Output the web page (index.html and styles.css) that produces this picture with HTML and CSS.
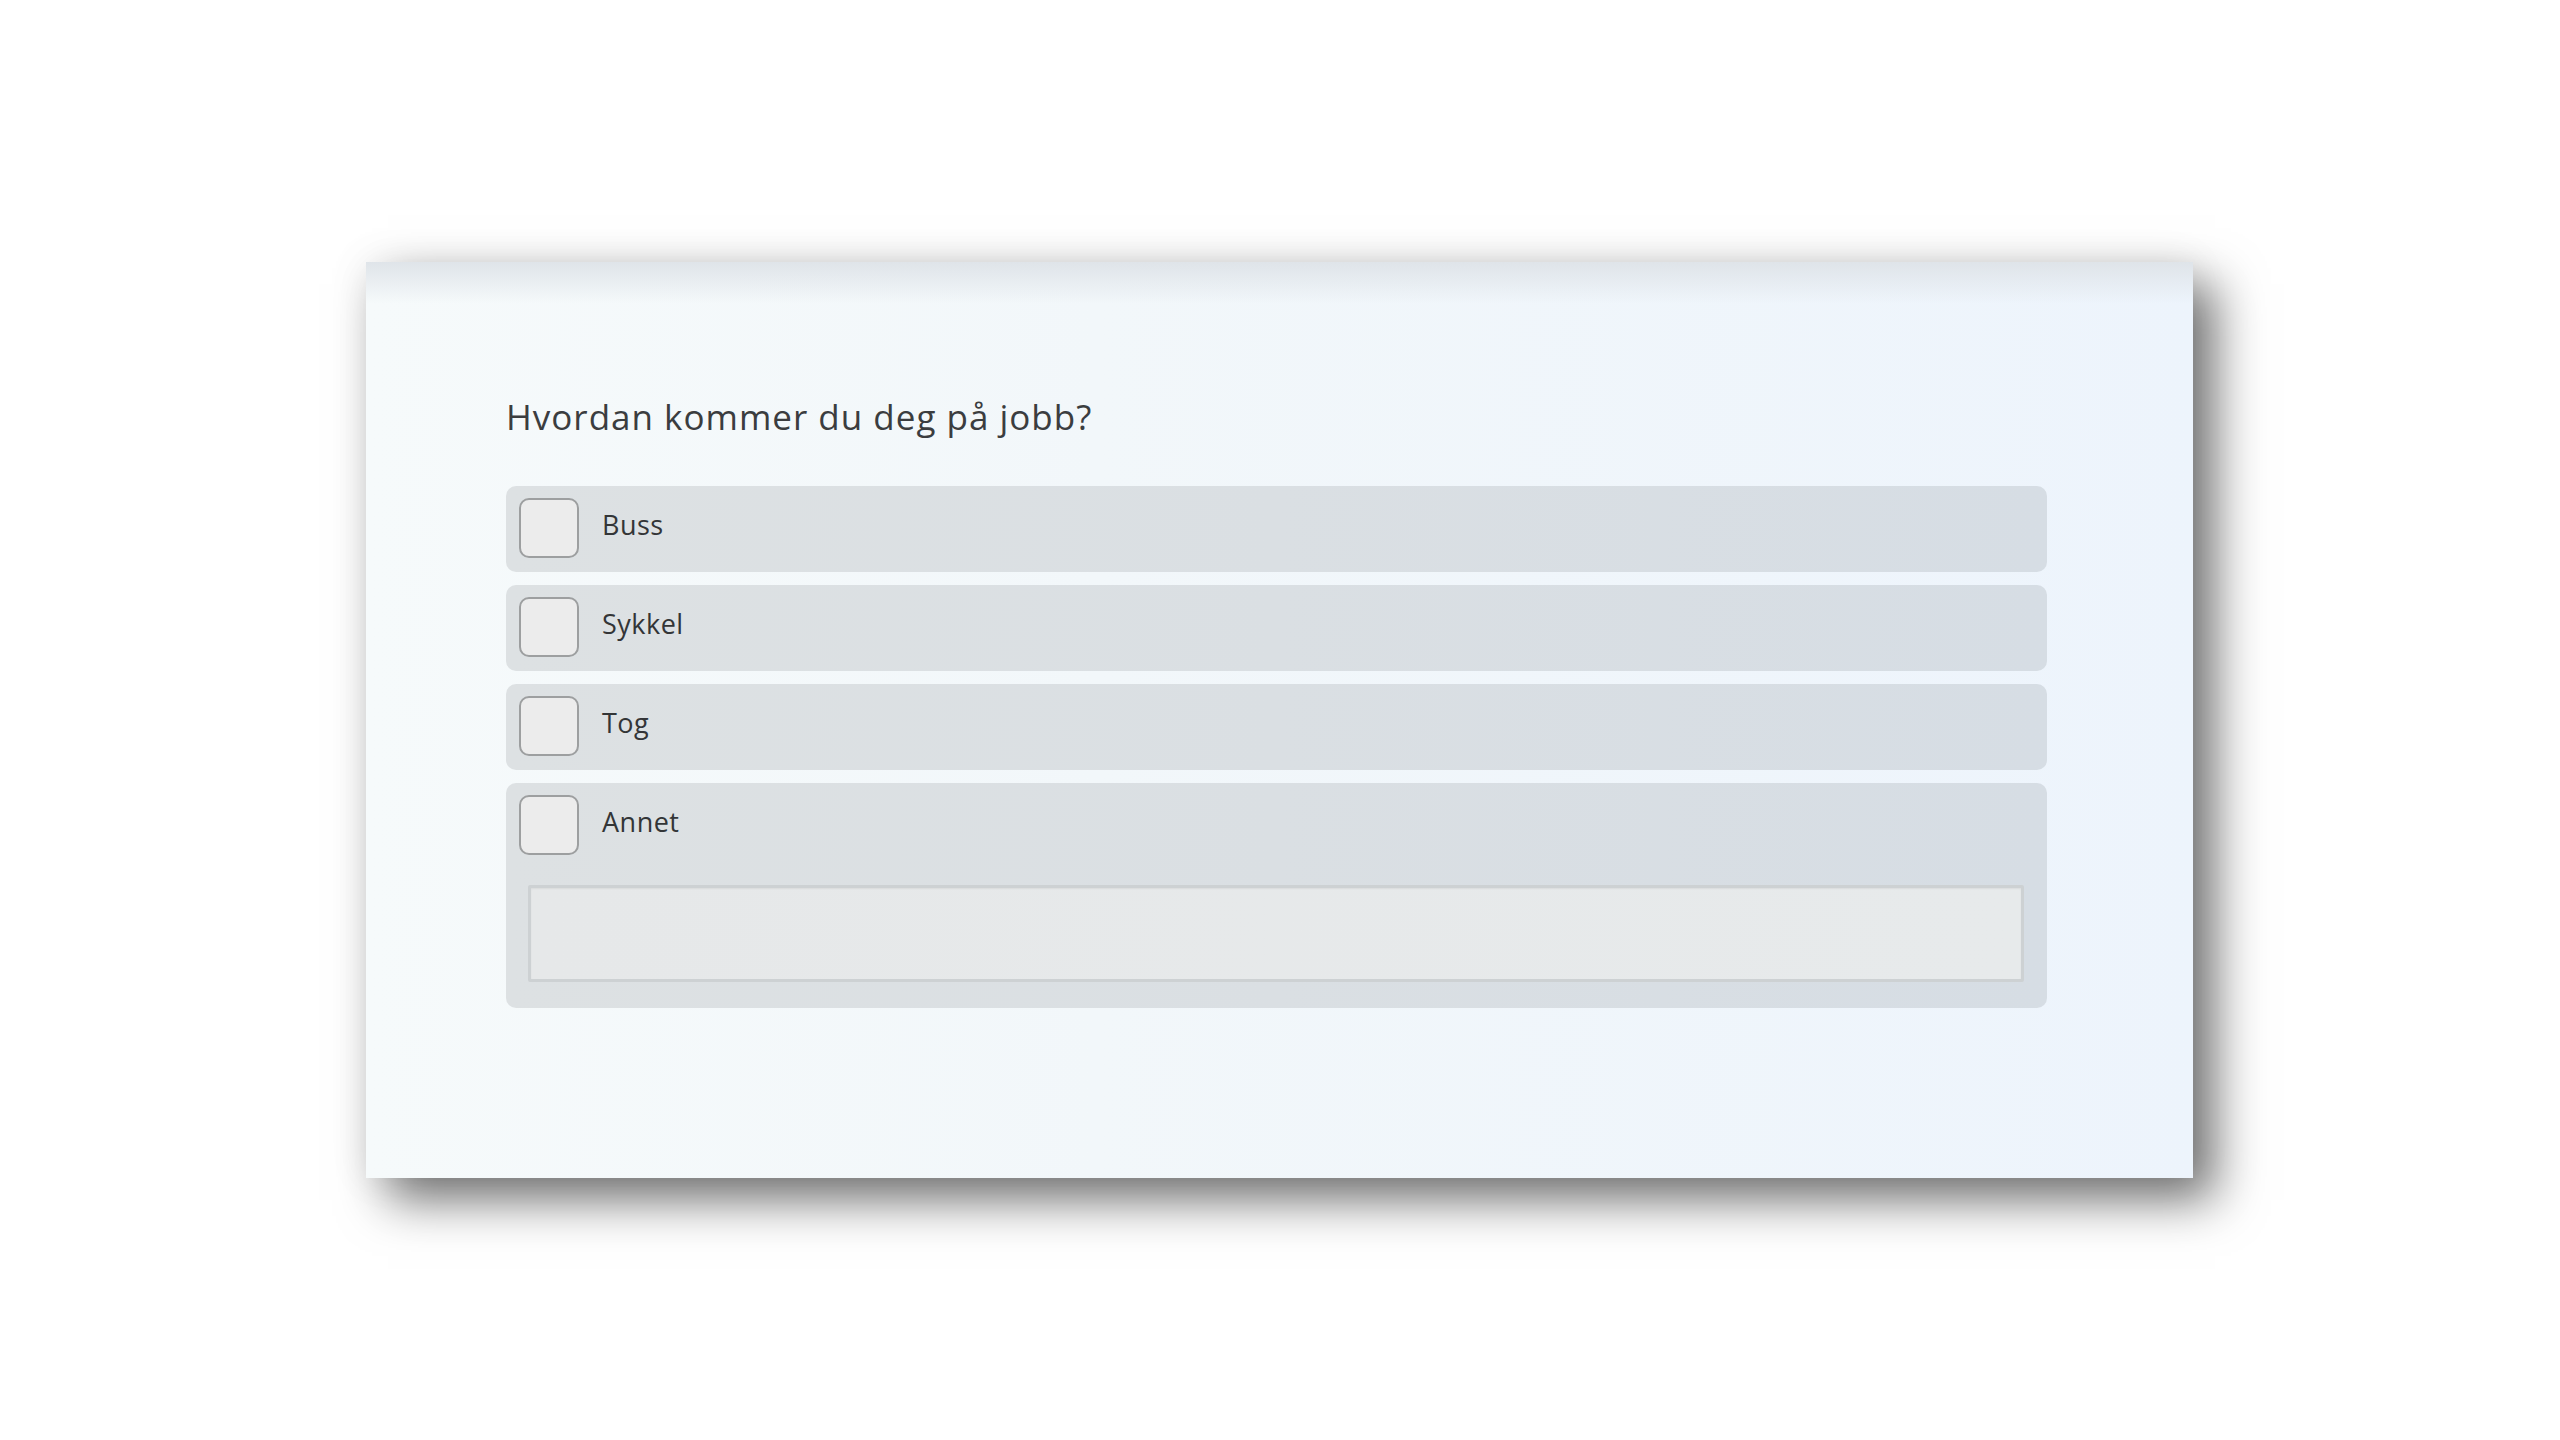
FILE: index.html
```html
<!DOCTYPE html>
<html lang="no">
<head>
<meta charset="utf-8">
<title>Hvordan kommer du deg på jobb?</title>
<link rel="stylesheet" href="styles.css">
</head>
<body>
<main class="page">
  <section class="card">
    <h1 class="question">Hvordan kommer du deg på jobb?</h1>
    <div class="options">
      <label class="option">
        <span class="option-head"><span class="box"></span><span class="label">Buss</span></span>
      </label>
      <label class="option">
        <span class="option-head"><span class="box"></span><span class="label">Sykkel</span></span>
      </label>
      <label class="option">
        <span class="option-head"><span class="box"></span><span class="label">Tog</span></span>
      </label>
      <div class="option option-other">
        <span class="option-head"><span class="box"></span><span class="label">Annet</span></span>
        <div class="other-input"></div>
      </div>
    </div>
  </section>
</main>
</body>
</html>
```

FILE: styles.css
```css
html, body {
  margin: 0;
  padding: 0;
  background: #ffffff;
}
body {
  width: 2560px;
  height: 1440px;
  overflow: hidden;
  font-family: "Open Sans", "Noto Sans", sans-serif;
}
.page {
  padding-top: 262px;
  padding-left: 366px;
}
.card {
  box-sizing: border-box;
  width: 1827px;
  height: 916px;
  padding: 131px 146px 0 140px;
  background:
    linear-gradient(to bottom, #dfe4e9 0px, rgba(240, 245, 249, 0) 42px),
    linear-gradient(to right, #f6fafb 0%, #f2f7fa 40%, #edf4fc 100%);
  box-shadow: 22px 22px 46px rgba(0, 0, 0, 0.55), 0 0 40px rgba(0, 0, 0, 0.07);
}
.question {
  margin: 0 0 45px 0;
  font-size: 35px;
  font-weight: 400;
  line-height: 47.7px;
  letter-spacing: 1px;
  color: #3b3d3f;
}
.options {
  display: flex;
  flex-direction: column;
  gap: 13px;
}
.option {
  display: flex;
  flex-direction: column;
  padding: 12px 13px 14px 13px;
  border-radius: 10px;
  background: linear-gradient(to right, #dde1e3 0%, #dadfe3 50%, #d6dde4 100%);
}
.option-head {
  display: flex;
  align-items: flex-start;
  gap: 23px;
}
.box {
  box-sizing: border-box;
  width: 60px;
  height: 60px;
  flex: none;
  border: 2px solid #9d9fa0;
  border-radius: 10px;
  background: #ececec;
}
.label {
  margin-top: 8px;
  font-size: 27px;
  line-height: 37px;
  letter-spacing: 0.5px;
  color: #333537;
}
.other-input {
  box-sizing: border-box;
  height: 97px;
  margin: 30px 10px 12px 9px;
  border: 3px solid #cdd1d3;
  border-radius: 2px;
  background: linear-gradient(to right, #e6e8e9 0%, #e7eaeb 100%);
  box-shadow: inset 0 1px 2px rgba(0, 0, 0, 0.06);
}
```
